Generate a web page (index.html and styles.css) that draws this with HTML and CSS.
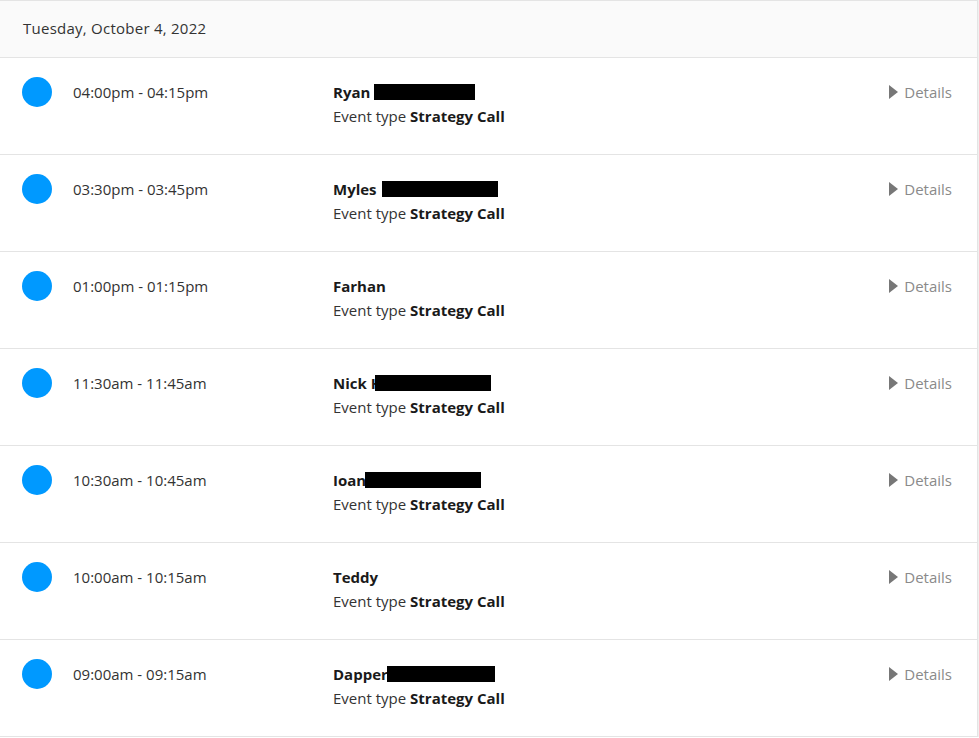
FILE: index.html
```html
<!DOCTYPE html>
<html>
<head>
<meta charset="utf-8">
<link rel="stylesheet" href="styles.css">
</head>
<body>
<div class="list">
  <div class="day">Tuesday, October 4, 2022</div>

  <div class="row">
    <span class="dot"></span>
    <div class="time">04:00pm - 04:15pm</div>
    <div class="info">
      <div class="name">Ryan <span class="redact" style="width:101px"></span></div>
      <div class="etype">Event type <b>Strategy Call</b></div>
    </div>
    <div class="details"><span class="tri"></span>Details</div>
  </div>

  <div class="row">
    <span class="dot"></span>
    <div class="time">03:30pm - 03:45pm</div>
    <div class="info">
      <div class="name">Myles <span class="redact myles" style="width:116px"></span></div>
      <div class="etype">Event type <b>Strategy Call</b></div>
    </div>
    <div class="details"><span class="tri"></span>Details</div>
  </div>

  <div class="row">
    <span class="dot"></span>
    <div class="time">01:00pm - 01:15pm</div>
    <div class="info">
      <div class="name">Farhan</div>
      <div class="etype">Event type <b>Strategy Call</b></div>
    </div>
    <div class="details"><span class="tri"></span>Details</div>
  </div>

  <div class="row">
    <span class="dot"></span>
    <div class="time">11:30am - 11:45am</div>
    <div class="info">
      <div class="name">Nick H<span class="redact overlap" style="width:116px"></span></div>
      <div class="etype">Event type <b>Strategy Call</b></div>
    </div>
    <div class="details"><span class="tri"></span>Details</div>
  </div>

  <div class="row">
    <span class="dot"></span>
    <div class="time">10:30am - 10:45am</div>
    <div class="info">
      <div class="name">Ioan<span class="redact tight" style="width:116px"></span></div>
      <div class="etype">Event type <b>Strategy Call</b></div>
    </div>
    <div class="details"><span class="tri"></span>Details</div>
  </div>

  <div class="row">
    <span class="dot"></span>
    <div class="time">10:00am - 10:15am</div>
    <div class="info">
      <div class="name">Teddy</div>
      <div class="etype">Event type <b>Strategy Call</b></div>
    </div>
    <div class="details"><span class="tri"></span>Details</div>
  </div>

  <div class="row">
    <span class="dot"></span>
    <div class="time">09:00am - 09:15am</div>
    <div class="info">
      <div class="name">Dapper<span class="redact tight" style="width:108px"></span></div>
      <div class="etype">Event type <b>Strategy Call</b></div>
    </div>
    <div class="details"><span class="tri"></span>Details</div>
  </div>
</div>
</body>
</html>
```

FILE: styles.css
```css
html, body {
  margin: 0;
  padding: 0;
  background: #ffffff;
}
body {
  font-family: "Open Sans", "Liberation Sans", sans-serif;
  font-size: 15px;
  color: #1a1a1a;
}
.list {
  width: 977px;
  border-top: 1px solid #e4e4e4;
  border-right: 1px solid #e4e4e4;
  box-shadow: 1px 0 0 #f0f0f0;
}
.day {
  height: 57px;
  box-sizing: border-box;
  padding-left: 23px;
  padding-bottom: 2px;
  display: flex;
  align-items: center;
  background: #fafafa;
  border-bottom: 1px solid #e4e4e4;
  color: #333333;
  letter-spacing: 0.25px;
}
.row {
  height: 97px;
  box-sizing: border-box;
  border-bottom: 1px solid #e4e4e4;
  display: flex;
  align-items: flex-start;
  padding: 19px 25px 0 22px;
}
.dot {
  width: 30px;
  height: 30px;
  border-radius: 50%;
  background: #0099ff;
  flex: none;
}
.time {
  margin-left: 21px;
  width: 260px;
  flex: none;
  line-height: 24px;
  margin-top: 3px;
  color: #333333;
}
.info {
  flex: 1;
  margin-top: 3px;
  line-height: 24px;
}
.name {
  font-weight: 700;
  color: #1a1a1a;
  display: flex;
  align-items: center;
}
.redact {
  display: inline-block;
  height: 16px;
  background: #000000;
  margin-left: 4px;
}
.redact.myles {
  margin-left: 5px;
}
.redact.tight {
  margin-left: -1px;
}
.redact.overlap {
  margin-left: -7px;
}
.etype {
  color: #333333;
}
.etype b {
  color: #1a1a1a;
}
.details {
  margin-top: 3px;
  line-height: 24px;
  color: #8a8a8a;
  display: flex;
  align-items: center;
}
.tri {
  width: 0;
  height: 0;
  border-top: 7px solid transparent;
  border-bottom: 7px solid transparent;
  border-left: 9px solid #777777;
  margin-right: 6px;
}
```
